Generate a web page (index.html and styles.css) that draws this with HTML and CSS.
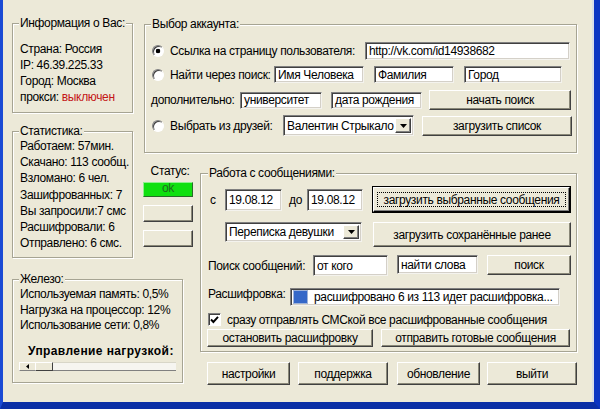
FILE: index.html
```html
<!DOCTYPE html>
<html lang="ru">
<head>
<meta charset="utf-8">
<title>VK</title>
<link rel="stylesheet" href="styles.css">
</head>
<body>
<div class="window">
  <div class="layout">

    <fieldset class="group info">
      <legend>Информация о Вас:</legend>
      <div class="lines lines-info">
        <div>Страна: Россия</div>
        <div>IP: 46.39.225.33</div>
        <div>Город: Москва</div>
        <div>прокси: <span class="off">выключен</span></div>
      </div>
    </fieldset>

    <fieldset class="group account">
      <legend>Выбор аккаунта:</legend>
      <div class="row acc-r1">
        <span class="radio checked"></span>
        <span class="lbl w-link">Ссылка на страницу пользователя:</span>
        <div class="field w-url">http://vk.com/id14938682</div>
      </div>
      <div class="row acc-r2">
        <span class="radio"></span>
        <span class="lbl w-find">Найти через поиск:</span>
        <div class="field w-name">Имя Человека</div>
        <div class="field w-fam">Фамилия</div>
        <div class="field w-city">Город</div>
      </div>
      <div class="row acc-r3">
        <span class="lbl w-extra">дополнительно:</span>
        <div class="field w-univ">университет</div>
        <div class="field w-birth">дата рождения</div>
        <button class="btn w-search">начать поиск</button>
      </div>
      <div class="row acc-r4">
        <span class="radio"></span>
        <span class="lbl w-friends">Выбрать из друзей:</span>
        <div class="field select w-friend">
          <span class="sel-text">Валентин Стрыкало</span>
          <span class="sel-arrow"><svg width="7" height="4" viewBox="0 0 7 4"><polygon points="0,0 7,0 3.5,4" fill="#000"/></svg></span>
        </div>
        <button class="btn w-load">загрузить список</button>
      </div>
    </fieldset>

    <fieldset class="group stats">
      <legend>Статистика:</legend>
      <div class="lines lines-stats">
        <div>Работаем: 57мин.</div>
        <div>Скачано: 113 сообщ.</div>
        <div>Взломано: 6 чел.</div>
        <div>Зашифрованных: 7</div>
        <div>Вы запросили:7 смс</div>
        <div>Расшифровали: 6</div>
        <div>Отправлено: 6 смс.</div>
      </div>
    </fieldset>

    <div class="status">
      <div class="status-label">Статус:</div>
      <div class="status-ok">ok</div>
      <button class="btn status-btn"></button>
      <button class="btn status-btn"></button>
    </div>

    <fieldset class="group messages">
      <legend>Работа с сообщениями:</legend>
      <div class="row msg-a">
        <span class="lbl w-from">с</span>
        <div class="field w-date1">19.08.12</div>
        <span class="lbl w-to">до</span>
        <div class="field w-date2">19.08.12</div>
        <button class="btn default w-loadsel"><span>загрузить выбранные сообщения</span></button>
      </div>
      <div class="row msg-b">
        <div class="field select w-corr">
          <span class="sel-text">Переписка девушки</span>
          <span class="sel-arrow"><svg width="7" height="4" viewBox="0 0 7 4"><polygon points="0,0 7,0 3.5,4" fill="#000"/></svg></span>
        </div>
        <button class="btn w-loadsaved">загрузить сохранённые ранее</button>
      </div>
      <div class="row msg-c">
        <span class="lbl w-msearch">Поиск сообщений:</span>
        <div class="field w-whom">от кого</div>
        <div class="field w-words">найти слова</div>
        <button class="btn w-find2">поиск</button>
      </div>
      <div class="row msg-d">
        <span class="lbl w-decode">Расшифровка:</span>
        <div class="field progress">
          <span class="chunk"></span>
          <span class="progress-text">расшифровано 6 из 113 идет расшифровка...</span>
        </div>
      </div>
      <div class="row msg-e">
        <span class="check"><svg width="9" height="9" viewBox="0 0 9 9"><polyline points="1,4.5 3.4,7 8,1.8" fill="none" stroke="#000" stroke-width="1.9"/></svg></span>
        <span class="lbl check-lbl">сразу отправлять СМСкой все расшифрованные сообщения</span>
      </div>
      <div class="row msg-f">
        <button class="btn w-stop">остановить расшифровку</button>
        <button class="btn w-send">отправить готовые сообщения</button>
      </div>
    </fieldset>

    <fieldset class="group hardware">
      <legend>Железо:</legend>
      <div class="lines lines-hw">
        <div>Используемая память: 0,5%</div>
        <div>Нагрузка на процессор: 12%</div>
        <div>Использование сети: 0,8%</div>
      </div>
      <div class="load-title">Управление нагрузкой:</div>
      <div class="slider">
        <span class="sb-arrow"><svg width="3" height="5" viewBox="0 0 3 5"><polygon points="3,0 0,2.5 3,5" fill="#000"/></svg></span>
        <span class="sb-thumb"></span>
        <span class="sb-track"></span>
      </div>
    </fieldset>

    <div class="bottom">
      <button class="btn b-settings">настройки</button>
      <button class="btn b-support">поддержка</button>
      <button class="btn b-update">обновление</button>
      <button class="btn b-exit">выйти</button>
    </div>

  </div>
</div>
</body>
</html>
```

FILE: styles.css
```css
html, body {
  margin: 0;
  padding: 0;
  background: #ece9d8;
}

.window {
  width: 600px;
  height: 409px;
  box-sizing: border-box;
  background: #ece9d8;
  border-left: 3px solid #1a4ad4;
  border-right: 6px solid #0b35c2;
  border-bottom: 7px solid #0a2fa6;
  box-shadow: inset -2px 0 0 #d8dde8;
  font-family: "Liberation Sans", Arial, sans-serif;
  font-size: 12px;
  letter-spacing: -0.35px;
  color: #000;
  overflow: hidden;
}

.layout {
  display: grid;
  grid-template-columns: 121px 11px 39px 10px 7px 377px;
  grid-template-rows: 97px 11px 29px 12px 82px 11px 14px 80px 10px 21px 2px;
  padding: 16px 0 0 9px;
}

/* group boxes */
.group {
  margin: 0;
  min-width: 0;
  box-sizing: border-box;
  border: 1px solid #a6a493;
  box-shadow: inset 1px 1px 0 #fff, 1px 1px 0 #fff;
  padding: 0 0 0 7px;
}

.group legend {
  font-size: 12px;
  line-height: 14px;
  padding: 0 1px;
  margin-left: -1px;
  background: #ece9d8;
}

.info { grid-column: 1; grid-row: 1; }
.account { grid-column: 3 / 7; grid-row: 1 / 4; margin-top: 1px; padding-left: 6px; }
.account legend { margin-left: 0; }
.stats { grid-column: 1; grid-row: 3 / 7; }
.status { grid-column: 3 / 5; grid-row: 5; }
.messages { grid-column: 6; grid-row: 5 / 9; margin-top: 1px; padding-left: 7px; }
.messages legend { margin-left: 0; }
.hardware { grid-column: 1 / 4; grid-row: 8 / 11; }
.bottom { grid-column: 6; grid-row: 10 / 12; }

.lines { white-space: nowrap; }
.lines-info { padding-top: 11px; line-height: 16px; }
.lines-stats { padding-top: 0; line-height: 16.2px; }
.lines-hw { padding-top: 1px; line-height: 15.5px; }

.off { color: #c41616; }

.load-title {
  margin: 10px 0 0 8px;
  font-weight: bold;
  line-height: 14px;
  letter-spacing: 0.4px;
  white-space: nowrap;
}

.slider {
  display: flex;
  width: 157px;
  height: 9px;
  margin: 4px 0 0 -1px;
}
.sb-arrow {
  width: 16px;
  box-sizing: border-box;
  border-top: 1px solid #fff;
  border-left: 1px solid #fff;
  border-bottom: 1px solid #808080;
  display: flex;
  align-items: center;
  justify-content: center;
}
.sb-thumb {
  width: 18px;
  box-sizing: border-box;
  border: 1px solid;
  border-color: #fff #404040 #404040 #fff;
  background: #ece9d8;
}
.sb-track {
  flex: 1;
  background: #f6f5f0;
  border-bottom: 1px solid #808080;
  border-top: 1px solid #d8d6c8;
}

/* rows */
.row {
  display: flex;
  align-items: center;
  white-space: nowrap;
}

.lbl {
  display: block;
  line-height: 14px;
  flex: none;
}

.field {
  box-sizing: border-box;
  flex: none;
  background: #fff;
  border: 1px solid;
  border-color: #808080 #f4f3ee #f4f3ee #808080;
  box-shadow: inset 1px 1px 0 #404040, inset -1px -1px 0 #d4d0c8;
  padding-left: 3px;
  display: flex;
  align-items: center;
  white-space: nowrap;
  overflow: hidden;
  line-height: 14px;
}

.select {
  padding-right: 2px;
}
.sel-text { flex: 1; }
.sel-arrow {
  box-sizing: border-box;
  width: 16px;
  height: calc(100% - 4px);
  flex: none;
  background: #ece9d8;
  border: 1px solid;
  border-color: #fff #404040 #404040 #fff;
  box-shadow: inset -1px -1px 0 #808080;
  display: flex;
  align-items: center;
  justify-content: center;
}

.btn {
  box-sizing: border-box;
  flex: none;
  margin: 0;
  padding: 0;
  font: inherit;
  letter-spacing: inherit;
  color: #000;
  background: #ece9d8;
  border: 1px solid;
  border-color: #fff #404040 #404040 #fff;
  box-shadow: inset -1px -1px 0 #8a8878;
  display: flex;
  align-items: center;
  justify-content: center;
  line-height: 14px;
  white-space: nowrap;
}

.btn.default {
  position: relative;
  border-color: #fff #000 #000 #fff;
  box-shadow: inset -1px -1px 0 #808080, 0 0 0 1px #000;
}
.btn.default::after {
  content: "";
  position: absolute;
  left: 3px;
  right: 3px;
  top: 4px;
  bottom: 4px;
  border: 1px dotted #000;
}

.radio {
  box-sizing: border-box;
  flex: none;
  width: 12px;
  height: 12px;
  border-radius: 50%;
  border: 1px solid;
  border-color: #808080 #fff #fff #808080;
  box-shadow: inset 1px 1px 0 #404040;
  background: #fff;
  margin-left: 1px;
}
.radio.checked {
  background: radial-gradient(circle, #000 0 2px, #fff 2.6px);
}

/* account rows */
.acc-r1 { margin-top: 11px; height: 18px; }
.acc-r2 { margin-top: 6px; height: 17px; }
.acc-r3 { margin-top: 7px; height: 20px; }
.acc-r4 { margin-top: 5px; height: 21px; }

.w-link { margin-left: 6px; width: 195px; }
.w-url { width: 205px; height: 18px; }
.w-find { margin-left: 6px; width: 104px; }
.w-name { width: 90px; height: 17px; }
.w-fam { margin-left: 10px; width: 80px; height: 17px; }
.w-city { margin-left: 10px; width: 98px; height: 17px; }
.w-extra { width: 89px; }
.w-univ { width: 82px; height: 17px; }
.w-birth { margin-left: 9px; width: 91px; height: 17px; }
.w-search { margin-left: 7px; width: 142px; height: 20px; }
.w-friends { margin-left: 6px; width: 113px; }
.w-friend { width: 131px; height: 21px; }
.w-load { margin-left: 8px; width: 150px; height: 20px; }

/* status */
.status {
  display: flex;
  flex-direction: column;
}
.status-label {
  margin-top: -1px;
  line-height: 14px;
  text-align: center;
  padding-left: 3px;
}
.status-ok {
  box-sizing: border-box;
  margin-top: 4px;
  margin-left: -1px;
  height: 15px;
  background: #10e010;
  border: 1px solid;
  border-color: #8ef08e #2a6a2a #2a6a2a #8ef08e;
  color: #1f6b1f;
  text-align: center;
  line-height: 11px;
}
.status-btn {
  margin-top: 8px;
  margin-left: -1px;
  width: 50px;
  height: 17px;
}

/* messages rows */
.msg-a { margin-top: 7px; height: 25px; }
.msg-b { margin-top: 10px; height: 25px; align-items: flex-start; }
.msg-c { margin-top: 8px; height: 21px; align-items: flex-start; }
.msg-d { margin-top: 12px; height: 18px; }
.msg-e { margin-top: 7px; height: 13px; }
.msg-f { margin-top: 3px; height: 18px; }

.w-from { margin-left: 2px; width: 15px; }
.w-date1 { width: 57px; height: 22px; }
.w-to { margin-left: 7px; width: 18px; }
.w-date2 { width: 56px; height: 22px; }
.w-loadsel { margin-left: 10px; width: 197px; height: 25px; }

.w-corr { margin-left: 17px; width: 137px; height: 20px; }
.w-loadsaved { margin-left: 11px; width: 198px; height: 25px; }

.w-msearch { width: 105px; margin-top: 4px; }
.w-whom { width: 75px; height: 21px; }
.w-words { margin-left: 9px; width: 81px; height: 19px; }
.w-find2 { margin-left: 9px; width: 84px; height: 20px; }

.w-decode { width: 82px; align-self: flex-start; margin-top: -1px; }
.progress {
  width: 270px;
  height: 18px;
  padding-left: 2px;
}
.chunk {
  flex: none;
  width: 13px;
  height: 12px;
  background: #3568c8;
  border: 1px solid #9fb3d8;
}
.progress-text { margin-left: 6px; }

.check {
  box-sizing: border-box;
  flex: none;
  width: 13px;
  height: 13px;
  background: #fff;
  border: 1px solid;
  border-color: #808080 #fff #fff #808080;
  box-shadow: inset 1px 1px 0 #404040;
  display: flex;
  align-items: center;
  justify-content: center;
}
.check-lbl { margin-left: 6px; }

.w-stop { margin-left: -1px; width: 166px; height: 18px; }
.w-send { margin-left: 8px; width: 189px; height: 18px; }

/* bottom buttons */
.bottom {
  display: flex;
  padding-left: 7px;
}
.bottom .btn { height: 23px; }
.b-settings { width: 83px; }
.b-support { margin-left: 8px; width: 90px; }
.b-update { margin-left: 9px; width: 83px; }
.b-exit { margin-left: 7px; width: 90px; }
```
